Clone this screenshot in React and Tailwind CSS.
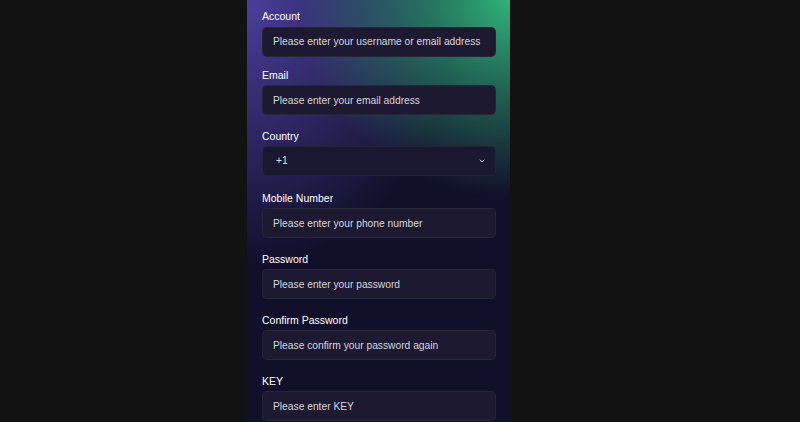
import React from 'react';

const fields = [
  { label: 'Account', placeholder: 'Please enter your username or email address', gap: '' },
  { label: 'Email', placeholder: 'Please enter your email address', gap: 'mt-[11px]' },
  { label: 'Country', select: '+1', gap: 'mt-[13.5px]' },
  { label: 'Mobile Number', placeholder: 'Please enter your phone number', gap: 'mt-[14.5px]' },
  { label: 'Password', placeholder: 'Please enter your password', gap: 'mt-[13.5px]' },
  { label: 'Confirm Password', placeholder: 'Please confirm your password again', gap: 'mt-[13.5px]' },
  { label: 'KEY', placeholder: 'Please enter KEY', gap: 'mt-[13.5px]' },
];

const Chevron = () => (
  <svg width="8" height="8" viewBox="0 0 24 24" fill="none" stroke="#c9c8d6" strokeWidth="3" strokeLinecap="round" strokeLinejoin="round">
    <path d="m6 9 6 6 6-6" />
  </svg>
);

const App = () => {
  return (
    <div className="w-full h-[422px] bg-[#121212] overflow-hidden pl-[247px] font-['Liberation_Sans',Arial,sans-serif]">
      <div className="w-[263px] h-full bg-[#120f2a] bg-[radial-gradient(ellipse_95%_55%_at_100%_0%,#30b27a_0%,rgba(48,178,122,0.5)_40%,transparent_85%),radial-gradient(ellipse_90%_70%_at_0%_0%,#4b3e9c_0%,rgba(75,62,156,0.5)_45%,transparent_90%)] pl-[15px] pr-[14px] pt-[9px] flex flex-col">
        {fields.map(f => (
          <div key={f.label} className={`flex flex-col ${f.gap}`}>
            <label className="text-[10.5px] leading-[14px] text-white mb-[3.5px]">{f.label}</label>
            {f.select ? (
              <div className="h-[30px] rounded-[5px] bg-[#1a1730] border border-white/5 pl-[13px] pr-[9px] flex items-center justify-between">
                <span className="text-[10.25px] text-[#e2e1ea]">{f.select}</span>
                <Chevron />
              </div>
            ) : (
              <input
                type="text"
                placeholder={f.placeholder}
                className="h-[30px] rounded-[5px] bg-[#1c1930] border border-white/5 px-[10px] text-[10.25px] text-white placeholder:text-[#d6d5de] outline-none"
              />
            )}
          </div>
        ))}
      </div>
    </div>
  );
};

export default App;
